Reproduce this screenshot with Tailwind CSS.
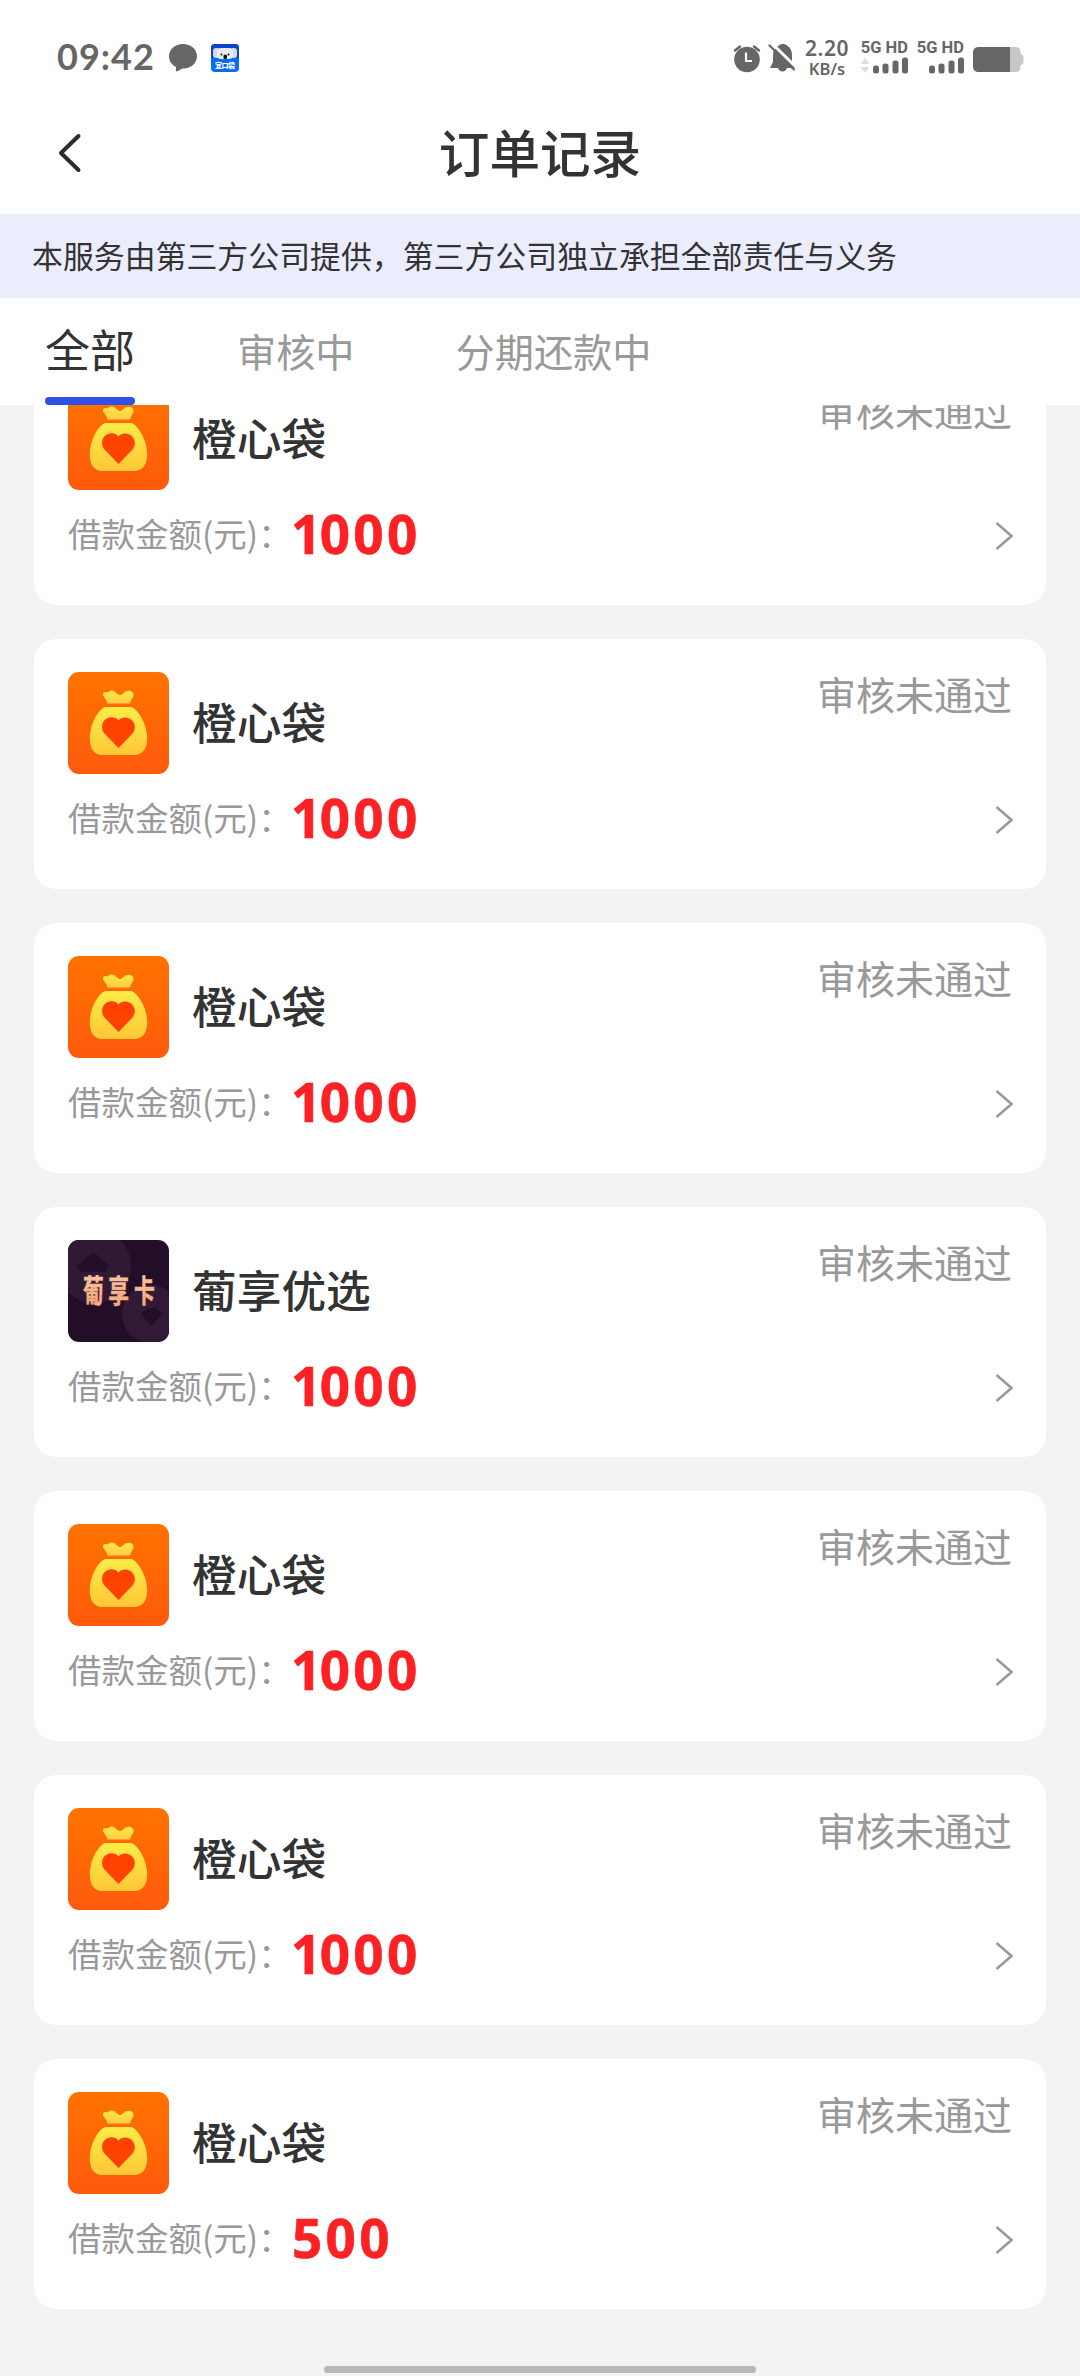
<!DOCTYPE html>
<html lang="zh-CN">
<head>
<meta charset="utf-8">
<meta name="viewport" content="width=1080">
<title>订单记录</title>
<script src="https://cdn.jsdelivr.net/npm/@tailwindcss/browser@4"></script>
</head>
<body class="w-[1080px] h-[2376px] overflow-hidden bg-[#f3f3f3] flex flex-col font-['Noto_Sans_CJK_SC',sans-serif] text-[#333333] relative">

<svg class="absolute size-0">
  <defs>
    <linearGradient id="bg" x1="0" y1="0" x2="0" y2="1"><stop offset="0" stop-color="#ff7300"/><stop offset="1" stop-color="#ff5a0c"/></linearGradient>
    <linearGradient id="gold" x1="0" y1="0" x2="0" y2="1"><stop offset="0" stop-color="#fdec48"/><stop offset="1" stop-color="#fdc836"/></linearGradient>
    <linearGradient id="tie" x1="0" y1="0" x2="0" y2="1"><stop offset="0" stop-color="#ffe840"/><stop offset="1" stop-color="#ffcd4a"/></linearGradient>
    <linearGradient id="peach" x1="0" y1="0" x2="0" y2="1"><stop offset="0" stop-color="#fccba6"/><stop offset="1" stop-color="#f3a274"/></linearGradient>
  </defs>
  <symbol id="bag" viewBox="0 0 101 102">
    <rect width="101" height="102" fill="url(#bg)"/>
    <path d="M35 23.500C34.500 19.500 37 19.500 39.500 20.500C42.500 17.500 46 18 48.500 21C50.500 23.500 53.500 23.500 55.500 21C58.500 17.500 66.500 18 65.500 23.500C65 26 62.500 28 62 31.500H39.500C39 28 36.500 26 35 23.500Z" fill="url(#tie)"/>
    <path d="M37 35H63.500C70 37.500 79.500 52 79.200 67C79 77.500 74 83 66 83H34.500C26.500 83 22 77.500 21.800 67C21.500 52 30.500 37.500 37 35Z" fill="url(#gold)"/>
    <path d="M50.500 48.500C53.500 44.500 59 44.800 62.500 47C67.500 50.500 68 56.500 65 61L50.500 76L36 61C33 56.500 33.500 50 38 47C42 44.500 47.500 44.500 50.500 48.500Z" fill="#ff4200"/>
  </symbol>
  <symbol id="card" viewBox="0 0 101 102">
    <rect width="101" height="102" fill="#230e2a"/>
    <circle cx="26" cy="26" r="37" fill="#2f1934"/>
    <circle cx="83" cy="74" r="29" fill="#321936"/>
    <path d="M26 12L41 26L37 32H13L9 26Z" fill="#230e2a"/>
    <path d="M73 74L80 68H88L94 74L83 86Z" fill="#230e2a"/>
    <text transform="scale(.67 1)" y="62.500" x="22.500 60 98.500" font-size="31" font-weight="700" fill="url(#peach)" stroke="url(#peach)" stroke-width=".6" font-family="Noto Sans CJK SC">葡享卡</text>
  </symbol>
</svg>

<!-- status bar -->
<div class="h-[110px] shrink-0 bg-white flex items-start text-[#666666]">
  <div class="ml-[57px] mt-[35px] w-[97px] text-[36px] leading-[43px] font-bold font-['Lato',sans-serif] tracking-[1px] whitespace-nowrap">09:42</div>
  <svg class="ml-[15px] mt-[44px] w-[28px] h-[28px]" viewBox="0 0 28 28"><path d="M14 0C21.800 0 28 5.300 28 12.300C28 19.300 21.800 24.500 14.500 24.500C12.500 24.500 11.500 26 7 27.500V23C3 21 0 17.500 0 12.300C0 5.300 6.200 0 14 0Z" fill="#666"/></svg>
  <svg class="ml-[14px] mt-[44px] w-[28px] h-[28px]" viewBox="0 0 28 28">
    <rect width="28" height="28" rx="4" fill="#0a6cf0"/><path d="M0 14V4A4 4 0 0 1 4 0H24A4 4 0 0 1 28 4V14Z" fill="#0b45cf"/>
    <rect x="2" y="4" width="7" height="10" rx="3" fill="#d6dbe4"/><rect x="19" y="4" width="7" height="10" rx="3" fill="#d6dbe4"/><rect x="6" y="4" width="16" height="11" rx="4" fill="#e9ebf0"/>
    <circle cx="10.500" cy="10.500" r="1" fill="#111"/><circle cx="17.500" cy="10.500" r="1" fill="#111"/><rect x="12.500" y="10.500" width="3.500" height="4.500" rx="1.500" fill="#111"/>
    <text x="4" y="24" font-size="7" font-weight="900" fill="#fff" textLength="20" font-family="Noto Sans CJK SC">宜口袋</text>
  </svg>
  <div class="grow"></div>
  <svg class="mt-[44px] w-[28px] h-[29px]" viewBox="0 0 28 29"><circle cx="14" cy="15.500" r="12.800" fill="#666"/><path d="M2 6.500L7 2.500M26 6.500L21 2.500" stroke="#666" stroke-width="2.500" stroke-linecap="round"/><path d="M13 8.500V17H19" fill="none" stroke="#fff" stroke-width="2.200"/></svg>
  <svg class="ml-[7px] mt-[43px] w-[28px] h-[30px]" viewBox="0 0 28 30"><path d="M11 2.500C13 .500 17 .500 19 2.500C22.500 4.500 24 8 24 12V19L27 25H2L5 19V12C5 8 7 4.500 11 2.500Z" fill="#666"/><path d="M10 25H19C18 29.500 11 29.500 10 25Z" fill="#666"/><path d="M4 .500L29 25" stroke="#fff" stroke-width="3"/><path d="M1.500 2.500L26 26.500" stroke="#666" stroke-width="2.200" stroke-linecap="round"/></svg>
  <div class="ml-[6px] mt-[34px] w-[50px] flex flex-col items-center font-['Noto_Sans',sans-serif] font-semibold whitespace-nowrap">
    <div class="text-[21px] leading-[29px] tracking-[0.5px]">2.20</div>
    <div class="-mt-[3px] text-[16.500px] leading-[17px]">KB/s</div>
  </div>
  <div class="ml-[6px] mt-[40px] w-[50px] flex flex-col items-end font-['Roboto',sans-serif] font-bold">
    <div class="text-[16.500px] leading-[15px] whitespace-nowrap">5G HD</div>
    <svg class="w-[48px] h-[18px] mt-px" viewBox="0 0 48 18"><path d="M.500 8L5 2L9.500 8ZM.500 11L5 17L9.500 11Z" fill="#dedede"/><g fill="#666"><rect x="13" y="9.500" width="6" height="8" rx="2.500"/><rect x="22.500" y="7.500" width="6" height="10" rx="2.500"/><rect x="32.500" y="4.500" width="6" height="13" rx="2.500"/><rect x="42" y="1.500" width="6" height="16" rx="2.500"/></g></svg>
  </div>
  <div class="ml-[6px] mt-[40px] w-[50px] flex flex-col items-end font-['Roboto',sans-serif] font-bold">
    <div class="text-[16.500px] leading-[15px] whitespace-nowrap">5G HD</div>
    <svg class="w-[48px] h-[18px] mt-px" viewBox="0 0 48 18"><g fill="#666"><rect x="13" y="9.500" width="6" height="8" rx="2.500"/><rect x="22.500" y="7.500" width="6" height="10" rx="2.500"/><rect x="32.500" y="4.500" width="6" height="13" rx="2.500"/><rect x="42" y="1.500" width="6" height="16" rx="2.500"/></g></svg>
  </div>
  <svg class="ml-[9px] mt-[47px] mr-[56px] w-[51px] h-[25px]" viewBox="0 0 51 25"><path d="M37 0H42C46 0 47.500 2 47.500 5V6.500L50.500 9V16L47.500 18.500V20C47.500 23 46 25 42 25H37Z" fill="#c8c8c8"/><path d="M37 0H6C2 0 0 2 0 6V19C0 23 2 25 6 25H37Z" fill="#666"/></svg>
</div>

<!-- title bar -->
<div class="h-[104px] shrink-0 bg-white grid grid-cols-[120px_1fr_120px] items-start">
  <svg class="ml-[57px] mt-[22px] w-[26px] h-[42px]" viewBox="0 0 26 42"><path d="M21.500 4L4 21L21.500 38" fill="none" stroke="#2c2c2c" stroke-width="4" stroke-linecap="round" stroke-linejoin="round"/></svg>
  <h1 class="mt-[9px] text-center text-[50.625px] leading-[64px] font-medium">订单记录</h1>
</div>

<!-- notice -->
<div class="h-[84px] shrink-0 bg-[#ebedfd] pl-[32px] pb-[2px] flex items-center text-[30.900px] leading-[44px] whitespace-nowrap">本服务由第三方公司提供，第三方公司独立承担全部责任与义务</div>

<!-- tabs -->
<div class="h-[107px] shrink-0 bg-white flex items-start pl-[45px] text-[39.200px] leading-[56px] text-[#999999] whitespace-nowrap">
  <div class="w-[90px] h-full flex flex-col justify-between text-[45px] text-[#333333]"><span class="mt-[23px]">全部</span><span class="h-[8px] rounded-full bg-[#3350e6]"></span></div>
  <div class="ml-[102px] mt-[24px]">审核中</div>
  <div class="ml-[101px] mt-[24px]">分期还款中</div>
</div>

<!-- order list, scrolled by part of the first card -->
<div class="grow overflow-hidden px-[34px]">
  <div id="list" class="-mt-[50px] flex flex-col gap-[34px]"></div>
</div>

<!-- home indicator -->
<div class="absolute left-[324px] top-[2366px] w-[432px] h-[7px] rounded-full bg-[#b8b8b8]"></div>

<script>
  const orders = [
    ['bag', '橙心袋', '1000'], ['bag', '橙心袋', '1000'], ['bag', '橙心袋', '1000'],
    ['card', '葡享优选', '1000'],
    ['bag', '橙心袋', '1000'], ['bag', '橙心袋', '1000'], ['bag', '橙心袋', '500'],
  ];
  // the narrow digit 1 is set tighter than the rest
  const figure = n => n.replace('1', '<span class="-ml-px tracking-[-1.600px]">1</span>');
  document.getElementById('list').innerHTML = orders.map(([icon, name, amount]) => `
    <article class="h-[250px] shrink-0 rounded-[22px] bg-white px-[34px] pt-[33px]">
      <div class="h-[102px] flex items-center">
        <svg class="w-[101px] h-[102px] rounded-[11px]"><use href="#${icon}"/></svg>
        <h2 class="ml-[23px] -mt-[5px] grow text-[44.700px] leading-[60px] font-medium">${name}</h2>
        <span class="self-start text-[39px] leading-[42px] text-[#999999]">审核未通过</span>
      </div>
      <div class="h-[84px] flex items-center">
        <span class="mt-[2px] w-[224px] text-[33.500px] leading-[48px] text-[#999999] whitespace-nowrap">借款金额(元)：</span>
        <span class="grow pt-[3px] text-[53px] leading-[60px] tracking-[3.300px] font-bold text-[#fb2124] font-['Noto_Sans',sans-serif] [-webkit-text-stroke:0.6px_#fb2124]">${figure(amount)}</span>
        <svg class="mt-[8px] -mr-px w-[18px] h-[28px]" viewBox="0 0 18 28"><path d="M1.500 1L16.500 14L1.500 27" fill="none" stroke="#999" stroke-width="2.600"/></svg>
      </div>
    </article>`).join('');
</script>
</body>
</html>
